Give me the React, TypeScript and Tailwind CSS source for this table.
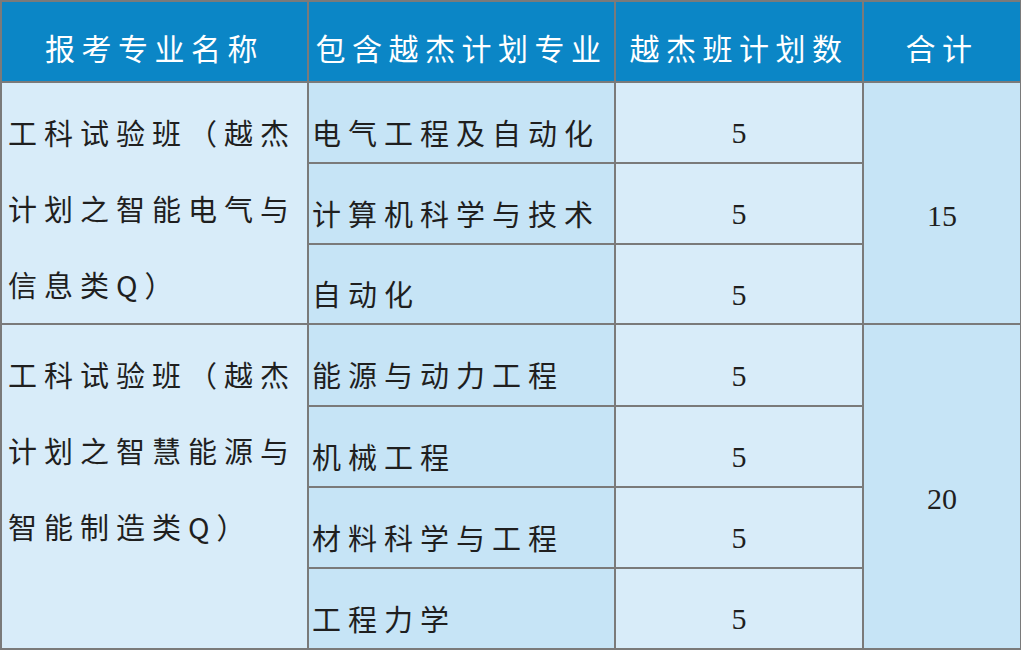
const CJK = "font-['Noto_Sans_CJK_SC','Noto_Sans',sans-serif]";
const NUM = "font-['Liberation_Serif',serif]";

type Group = { name: string[]; majors: string[]; total: string; heights: number[] };

const GROUPS: Group[] = [
  {
    name: ["工科试验班（越杰", "计划之智能电气与", "信息类Q）"],
    majors: ["电气工程及自动化", "计算机科学与技术", "自动化"],
    total: "15",
    heights: [81, 81, 80],
  },
  {
    name: ["工科试验班（越杰", "计划之智慧能源与", "智能制造类Q）"],
    majors: ["能源与动力工程", "机械工程", "材料科学与工程", "工程力学"],
    total: "20",
    heights: [82, 81, 81, 81],
  },
];

const border = "border-2 border-[#7a7a7a]";

export default function App() {
  return (
    <div className="w-[1021px] h-[651px] bg-white overflow-hidden">
      <table className={`border-collapse table-fixed w-[1020px] ${CJK} text-[#1f1f1f]`}>
        <colgroup>
          <col className="w-[307px]" />
          <col className="w-[307px]" />
          <col className="w-[248px]" />
          <col className="w-[158px]" />
        </colgroup>
        <thead>
          <tr className="h-[81px] bg-[#0b86c6] text-white text-[30px] tracking-[6.5px]">
            {["报考专业名称", "包含越杰计划专业", "越杰班计划数", "合计"].map((h) => (
              <th key={h} className={`${border} font-normal text-center pt-3 whitespace-nowrap`}>
                {h}
              </th>
            ))}
          </tr>
        </thead>
        <tbody>
          {GROUPS.map((g) =>
            g.majors.map((m, i) => (
              <tr key={m} style={{ height: g.heights[i] }}>
                {i === 0 && (
                  <td rowSpan={g.majors.length} className={`${border} bg-[#d8ecf9] align-top pl-[6px] pt-[12px]`}>
                    {g.name.map((l) => (
                      <div key={l} className="h-[76px] flex items-center text-[29px] tracking-[7px] whitespace-nowrap">
                        {l}
                      </div>
                    ))}
                  </td>
                )}
                <td className={`${border} bg-[#c6e4f6] pl-[3px] pt-5 text-[29px] tracking-[7px] whitespace-nowrap`}>
                  {m}
                </td>
                <td className={`${border} bg-[#d8ecf9] text-center pt-5 text-[30px] ${NUM}`}>5</td>
                {i === 0 && (
                  <td rowSpan={g.majors.length} className={`${border} bg-[#c6e4f6] text-center pt-6 text-[30px] ${NUM}`}>
                    {g.total}
                  </td>
                )}
              </tr>
            ))
          )}
        </tbody>
      </table>
    </div>
  );
}
